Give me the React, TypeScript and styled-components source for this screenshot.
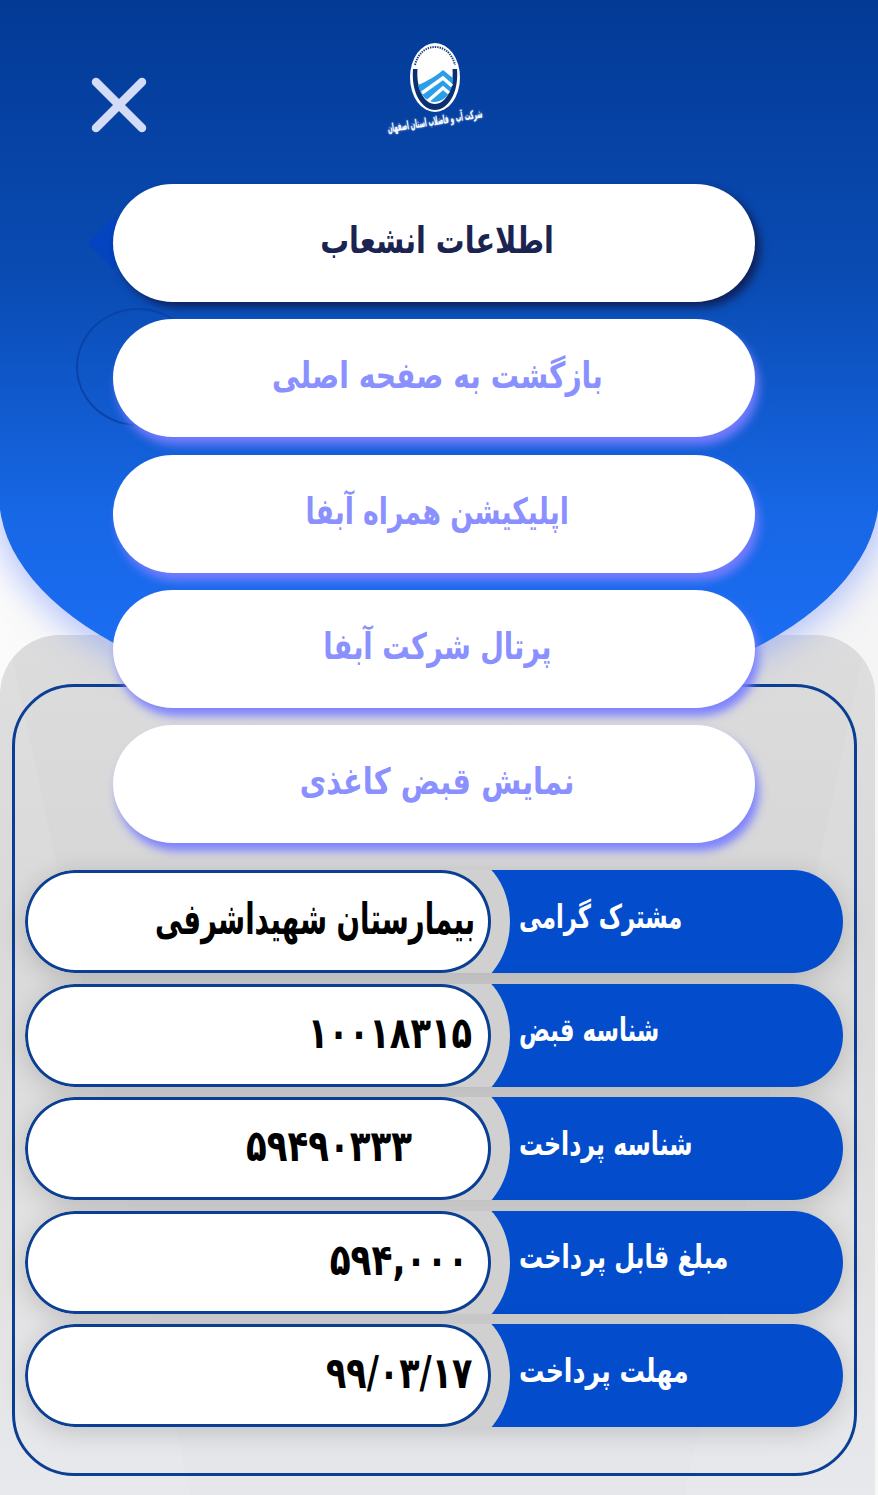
import styled, { createGlobalStyle } from "styled-components";

const menuItems = [
  { text: "اطلاعات انشعاب", active: true, stretch: 0.99 },
  { text: "بازگشت به صفحه اصلی", active: false, stretch: 0.97 },
  { text: "اپلیکیشن همراه آبفا", active: false, stretch: 0.92 },
  { text: "پرتال شرکت آبفا", active: false, stretch: 0.94 },
  { text: "نمایش قبض کاغذی", active: false, stretch: 1 },
];

const rows = [
  { label: "مشترک گرامی", labelStretch: 0.87, value: "بیمارستان شهیداشرفی", valueStretch: 0.81, inset: 13 },
  { label: "شناسه قبض", labelStretch: 0.88, value: "۱۰۰۱۸۳۱۵", valueStretch: 0.99, inset: 16 },
  { label: "شناسه پرداخت", labelStretch: 0.91, value: "۵۹۴۹۰۳۳۳", valueStretch: 1, inset: 76 },
  { label: "مبلغ قابل پرداخت", labelStretch: 0.92, value: "۵۹۴,۰۰۰", valueStretch: 1.01, inset: 20 },
  { label: "مهلت پرداخت", labelStretch: 0.97, value: "۹۹/۰۳/۱۷", valueStretch: 0.98, inset: 16 },
];

const App = () => {
  return (
    <Page>
      <GlobalStyle />
      <GrayPanel />
      <Dome />
      <Diamond />
      <Ring />
      <Content>
        <Header>
          <CloseIcon viewBox="0 0 58 58">
            <path
              d="M6 6 L52 52 M52 6 L6 52"
              stroke="#d3dbf7"
              strokeWidth="8.5"
              strokeLinecap="round"
              fill="none"
            />
          </CloseIcon>
          <Logo>
            <svg width="50" height="69" viewBox="0 0 50 69">
              <ellipse cx="25" cy="34.5" rx="25" ry="34.5" fill="#fff" />
              <path
                d="M5 22 C8 10 16 4 25 4 C34 4 42 10 45 22"
                fill="none"
                stroke="#1c3f7c"
                strokeWidth="2"
                strokeDasharray="1.4 1"
              />
              <path
                d="M3 26 C1 50 12 67 25 67 C38 67 49 50 47 26 L42.5 26 C44 45 36 61 25 61 C14 61 6 45 7.5 26 Z"
                fill="#0b2f73"
              />
              <path
                d="M8 42 C18 38 27 32 33 27 C37 30 40 33 43 35 C43 48 36 58 25 59 C16 59 10 51 8 42 Z"
                fill="#2a9fe8"
              />
              <path
                d="M12 50 L33 35 L42 43 M18 58 L33 45 L39 50"
                fill="none"
                stroke="#fff"
                strokeWidth="3.4"
              />
            </svg>
            <LogoCaption>
              <span>شرکت آب و فاضلاب استان اصفهان</span>
            </LogoCaption>
          </Logo>
        </Header>
        <Menu>
          {menuItems.map((item) => (
            <MenuButton key={item.text} $active={item.active}>
              <Stretched $x={item.stretch} $y={1.25} $origin="center">
                {item.text}
              </Stretched>
            </MenuButton>
          ))}
        </Menu>
        <Frame>
          {rows.map((row) => (
            <Row key={row.label}>
              <ValueSlot>
                <ValuePill $inset={row.inset}>
                  <Stretched $x={row.valueStretch} $y={1.28} $origin="right">
                    {row.value}
                  </Stretched>
                </ValuePill>
              </ValueSlot>
              <Label>
                <Stretched $x={row.labelStretch} $y={1.25} $origin="left">
                  {row.label}
                </Stretched>
              </Label>
            </Row>
          ))}
        </Frame>
      </Content>
    </Page>
  );
};

export default App;

const GlobalStyle = createGlobalStyle`
  html, body {
    margin: 0;
    padding: 0;
    background: #f3f3f4;
  }
  * {
    box-sizing: border-box;
  }
`;

const Page = styled.div`
  position: relative;
  width: 878px;
  height: 1495px;
  overflow: hidden;
  font-family: "DejaVu Sans", "Noto Sans", sans-serif;
  background: linear-gradient(100deg, #ffffff 0%, #eeeeef 40%, #f7f7f8 100%);
`;

const Dome = styled.div`
  position: absolute;
  top: 0;
  left: -1px;
  width: 880px;
  height: 715px;
  border-radius: 0 0 440px 440px / 0 0 220px 220px;
  background: linear-gradient(180deg, #033a96 0%, #0a4cb4 40%, #1767e6 72%, #1d70f8 100%);
  box-shadow: 0 4px 30px 8px rgba(130, 155, 255, 0.5);
  clip-path: inset(-60px -60px 12px -60px);
`;

const Diamond = styled.div`
  position: absolute;
  top: 225px;
  left: 95px;
  width: 36px;
  height: 36px;
  transform: rotate(45deg);
  background: #0444c0;
`;

const Ring = styled.div`
  position: absolute;
  top: 308px;
  left: 76px;
  width: 124px;
  height: 118px;
  border: 2px solid #0a43a8;
  border-radius: 50%;
`;

const GrayPanel = styled.div`
  position: absolute;
  top: 635px;
  left: 0;
  width: 875px;
  height: 860px;
  border-radius: 60px 60px 0 0;
  background:
    linear-gradient(78deg, rgba(255, 255, 255, 0.08) 0 18%, transparent 18% 100%),
    linear-gradient(102deg, transparent 0 82%, rgba(255, 255, 255, 0.07) 82% 100%),
    linear-gradient(180deg, #dcdcdd 0%, #d6d6d7 35%, #e0e0e1 75%, #e6e7eb 100%);
`;

const Content = styled.div`
  position: relative;
  display: flex;
  flex-direction: column;
`;

const Header = styled.header`
  display: flex;
  align-items: flex-start;
  height: 184px;
  padding: 43px 0 0 90px;
`;

const CloseIcon = styled.svg`
  width: 58px;
  height: 58px;
  margin-top: 33px;
`;

const Logo = styled.div`
  display: flex;
  flex-direction: column;
  align-items: center;
  width: 100px;
  margin-left: 237px;
`;

const LogoCaption = styled.div`
  display: flex;
  justify-content: center;
  direction: rtl;
  width: 100px;
  margin-top: 3px;
  font-size: 8px;
  line-height: 14px;
  font-weight: 700;
  white-space: nowrap;
  color: #fff;
  text-shadow: 0 0 2px rgba(200, 225, 255, 0.9);
  transform: rotate(-9deg) scale(0.68, 1.5);
`;

const Stretched = styled.span<{ $x: number; $y: number; $origin: string }>`
  display: inline-block;
  direction: rtl;
  white-space: nowrap;
  transform: scale(${(p) => p.$x}, ${(p) => p.$y});
  transform-origin: ${(p) => p.$origin} center;
`;

const Menu = styled.nav`
  position: relative;
  z-index: 2;
  display: flex;
  flex-direction: column;
  gap: 17.25px;
  width: 642px;
  margin-left: 113px;
`;

const MenuButton = styled.div<{ $active: boolean }>`
  display: flex;
  align-items: center;
  justify-content: center;
  height: 118px;
  padding: 0 0 6px 6px;
  border-radius: 60px / 59px;
  background: #fff;
  font-size: 29px;
  font-weight: 700;
  color: ${(p) => (p.$active ? "#1b2450" : "#8b90ff")};
  box-shadow: ${(p) =>
    p.$active
      ? "5px 5px 8px rgba(14, 28, 80, 0.9)"
      : "4px 8px 10px rgba(120, 125, 255, 0.95)"};
`;

const Frame = styled.section`
  display: flex;
  flex-direction: column;
  gap: 10.5px;
  width: 845px;
  height: 792px;
  margin: -159px 0 0 12px;
  padding: 183px 11px 0 10px;
  border: 3px solid #0a3f94;
  border-radius: 62px;
`;

const Row = styled.div`
  display: flex;
  height: 103px;
  overflow: hidden;
  border-radius: 50px / 51.5px;
  box-shadow: 0 5px 26px rgba(0, 0, 0, 0.16);
`;

const ValueSlot = styled.div`
  position: relative;
  z-index: 1;
  flex: 0 0 466px;

  &::before {
    content: "";
    position: absolute;
    top: -18px;
    right: -19px;
    width: 120px;
    height: 139px;
    border-radius: 0 57px 57px 0 / 0 70px 70px 0;
    background: #d0d0d1;
  }
`;

const ValuePill = styled.div<{ $inset: number }>`
  position: relative;
  display: flex;
  align-items: center;
  justify-content: flex-end;
  height: 103px;
  padding: 0 ${(p) => p.$inset}px 5px 16px;
  border: 3px solid #0a3f94;
  border-radius: 50px / 51.5px;
  background: #fff;
  font-size: 34px;
  font-weight: 700;
  color: #000;
`;

const Label = styled.div`
  flex: 1;
  display: flex;
  align-items: center;
  height: 103px;
  padding: 0 0 10px 28px;
  background: #034dcc;
  font-size: 26px;
  font-weight: 700;
  color: #fff;
`;
